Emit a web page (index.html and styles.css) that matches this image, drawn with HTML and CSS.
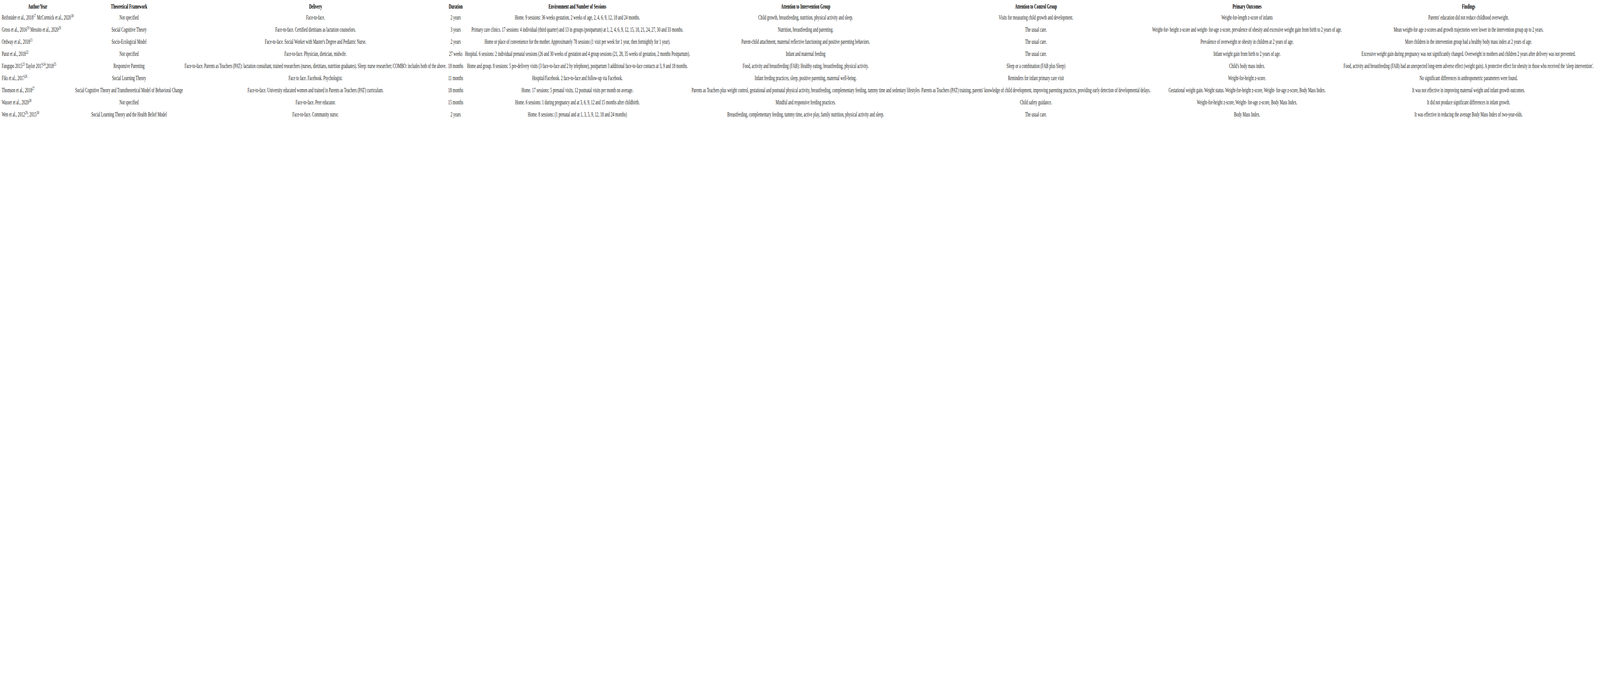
FILE: index.html
```html
<!DOCTYPE html>
<html lang="en">
<head>
<meta charset="utf-8">
<title>Interventions table</title>
<link rel="stylesheet" href="styles.css">
</head>
<body>
<div class="sheet">
<table class="studies">
  <thead>
    <tr>
      <th>Author/Year</th>
      <th>Theoretical Framework</th>
      <th>Delivery</th>
      <th>Duration</th>
      <th>Environment and Number of Sessions</th>
      <th>Attention to Intervention Group</th>
      <th>Attention to Control Group</th>
      <th>Primary Outcomes</th>
      <th>Findings</th>
    </tr>
  </thead>
  <tbody>
    <tr>
      <td>Reifsnider et al., 2018<sup>17</sup> McCormick et al., 2020<sup>18</sup></td>
      <td>Not specified</td>
      <td>Face-to-face.</td>
      <td>2 years</td>
      <td>Home. 9 sessions: 36 weeks gestation, 2 weeks of age, 2, 4, 6, 9, 12, 18 and 24 months.</td>
      <td>Child growth, breastfeeding, nutrition, physical activity and sleep.</td>
      <td>Visits for measuring child growth and development.</td>
      <td>Weight-for-length z-score of infants</td>
      <td>Parents' education did not reduce childhood overweight.</td>
    </tr>
    <tr>
      <td>Gross et al., 2016<sup>19</sup> Messito et al., 2020<sup>20</sup></td>
      <td>Social Cognitive Theory</td>
      <td>Face-to-face. Certified dietitians as lactation counselors.</td>
      <td>3 years</td>
      <td>Primary care clinics. 17 sessions: 4 individual (third quarter) and 13 in groups (postpartum) at 1, 2, 4, 6, 9, 12, 15, 18, 21, 24, 27, 30 and 33 months.</td>
      <td>Nutrition, breastfeeding and parenting.</td>
      <td>The usual care.</td>
      <td>Weight-for- height z-score and weight- for-age z-score, prevalence of obesity and excessive weight gain from birth to 2 years of age.</td>
      <td>Mean weight-for age z-scores and growth trajectories were lower in the intervention group up to 2 years.</td>
    </tr>
    <tr>
      <td>Ordway et al., 2018<sup>21</sup></td>
      <td>Socio-Ecological Model</td>
      <td>Face-to-face. Social Worker with Master's Degree and Pediatric Nurse.</td>
      <td>2 years</td>
      <td>Home or place of convenience for the mother. Approximately 78 sessions (1 visit per week for 1 year, then fortnightly for 1 year).</td>
      <td>Parent-child attachment, maternal reflective functioning and positive parenting behaviors.</td>
      <td>The usual care.</td>
      <td>Prevalence of overweight or obesity in children at 2 years of age.</td>
      <td>More children in the intervention group had a healthy body mass index at 2 years of age.</td>
    </tr>
    <tr>
      <td>Parat et al., 2018<sup>22</sup></td>
      <td>Not specified</td>
      <td>Face-to-face. Physician, dietician, midwife.</td>
      <td>27 weeks</td>
      <td>Hospital. 6 sessions: 2 individual prenatal sessions (26 and 30 weeks of gestation and 4 group sessions (21, 28, 35 weeks of gestation, 2 months Postpartum).</td>
      <td>Infant and maternal feeding</td>
      <td>The usual care.</td>
      <td>Infant weight gain from birth to 2 years of age.</td>
      <td>Excessive weight gain during pregnancy was not significantly changed. Overweight in mothers and children 2 years after delivery was not prevented.</td>
    </tr>
    <tr>
      <td>Fangupo 2015<sup>23</sup> Taylor 2017<sup>24</sup>,2018<sup>25</sup></td>
      <td>Responsive Parenting</td>
      <td>Face-to-face. Parents as Teachers (PAT): lactation consultant, trained researchers (nurses, dietitians, nutrition graduates). Sleep: nurse researcher; COMBO: includes both of the above.</td>
      <td>18 months</td>
      <td>Home and group. 8 sessions: 5 pre-delivery visits (3 face-to-face and 2 by telephone), postpartum 3 additional face-to-face contacts at 3, 9 and 18 months.</td>
      <td>Food, activity and breastfeeding (FAB): Healthy eating, breastfeeding, physical activity.</td>
      <td>Sleep or a combination (FAB plus Sleep)</td>
      <td>Child's body mass index.</td>
      <td>Food, activity and breastfeeding (FAB) had an unexpected long-term adverse effect (weight gain). A protective effect for obesity in those who received the 'sleep intervention'.</td>
    </tr>
    <tr>
      <td>Fiks et al., 2017<sup>26</sup></td>
      <td>Social Learning Theory</td>
      <td>Face to face. Facebook. Psychologist.</td>
      <td>11 months</td>
      <td>Hospital/Facebook. 2 face-to-face and follow-up via Facebook.</td>
      <td>Infant feeding practices, sleep, positive parenting, maternal well-being.</td>
      <td>Reminders for infant primary care visit</td>
      <td>Weight-for-height z-score.</td>
      <td>No significant differences in anthropometric parameters were found.</td>
    </tr>
    <tr>
      <td>Thomson et al., 2018<sup>27</sup></td>
      <td>Social Cognitive Theory and Transtheoretical Model of Behavioral Change</td>
      <td>Face-to-face. University educated women and trained in Parents as Teachers (PAT) curriculum.</td>
      <td>18 months</td>
      <td>Home. 17 sessions: 5 prenatal visits, 12 postnatal visits per month on average.</td>
      <td>Parents as Teachers plus weight control, gestational and postnatal physical activity, breastfeeding, complementary feeding, tummy time and sedentary lifestyles</td>
      <td>Parents as Teachers (PAT) training, parents' knowledge of child development, improving parenting practices, providing early detection of developmental delays.</td>
      <td>Gestational weight gain. Weight status. Weight-for-height z-score, Weight- for-age z-score, Body Mass Index.</td>
      <td>It was not effective in improving maternal weight and infant growth outcomes.</td>
    </tr>
    <tr>
      <td>Wasser et al., 2020<sup>28</sup></td>
      <td>Not specified</td>
      <td>Face-to-face. Peer educator.</td>
      <td>15 months</td>
      <td>Home. 6 sessions: 1 during pregnancy and at 3, 6, 9, 12 and 15 months after childbirth.</td>
      <td>Mindful and responsive feeding practices.</td>
      <td>Child safety guidance.</td>
      <td>Weight-for-height z-score, Weight- for-age z-score, Body Mass Index.</td>
      <td>It did not produce significant differences in infant growth.</td>
    </tr>
    <tr>
      <td>Wen et al., 2012<sup>29</sup>; 2015<sup>30</sup></td>
      <td>Social Learning Theory and the Health Belief Model</td>
      <td>Face-to-face. Community nurse.</td>
      <td>2 years</td>
      <td>Home. 8 sessions: (1 prenatal and at 1, 3, 5, 9, 12, 18 and 24 months)</td>
      <td>Breastfeeding, complementary feeding, tummy time, active play, family nutrition, physical activity and sleep.</td>
      <td>The usual care.</td>
      <td>Body Mass Index.</td>
      <td>It was effective in reducing the average Body Mass Index of two-year-olds.</td>
    </tr>
  </tbody>
</table>
</div>
<script src="script.js"></script>
</body>
</html>
```

FILE: styles.css
```css
html {
  background: #ffffff;
  overflow-x: hidden;
}

body {
  margin: 0;
  background: #ffffff;
  color: #1a1a1a;
  font-family: "Liberation Serif", "Times New Roman", serif;
  font-size: 16.7px;
}

/* The reference frame is 7464px wide; the sheet is laid out at that width
   and scaled horizontally to the real viewport width (--sx set by script). */
.sheet {
  width: 7464px;
  box-sizing: border-box;
  padding: 7px 8px 8px;
  transform: scaleX(var(--sx, 1));
  transform-origin: 0 0;
}

.studies {
  border-collapse: collapse;
  white-space: nowrap;
}

.studies th {
  font-weight: bold;
  color: #000000;
  text-align: center;
  line-height: 20px;
  padding: 0 4px 3px;
}

.studies td {
  text-align: center;
  line-height: 20px;
  padding: 5px 4px 6px;
}

.studies th:first-child,
.studies td:first-child {
  padding-left: 0;
}

.studies td:first-child {
  text-align: left;
}

.studies sup {
  font-size: 12px;
  line-height: 0;
  vertical-align: 6px;
}
```

FILE: script.js
```js
(function () {
  var sx = window.innerWidth / 7464;
  if (sx > 1) { sx = 1; }
  document.documentElement.style.setProperty('--sx', sx.toFixed(5));
})();
```
